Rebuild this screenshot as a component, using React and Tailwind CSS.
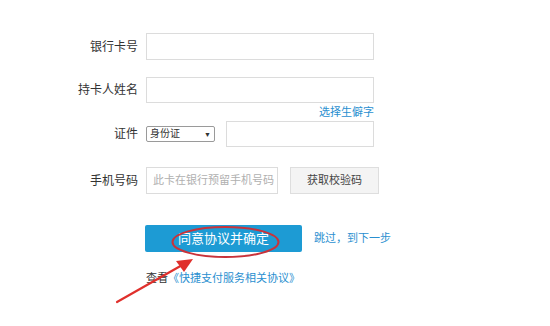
const App = () => {
  return (
    <div
      className="relative w-[550px] h-[326px] bg-white text-[#333] overflow-hidden"
      style={{ fontFamily: '"Liberation Sans", "Noto Sans CJK SC", sans-serif' }}
    >
      <div className="flex flex-col pt-[33px]">
        {/* 银行卡号 */}
        <div className="flex items-center">
          <label className="w-[138px] pr-0 text-right text-[12px]">银行卡号</label>
          <div className="ml-[8px] w-[228px] h-[27px] border border-[#dcdcdc] bg-white" />
        </div>

        {/* 持卡人姓名 */}
        <div className="flex items-center mt-[17px]">
          <label className="w-[138px] text-right text-[12px]">持卡人姓名</label>
          <div className="ml-[8px] w-[228px] h-[26px] border border-[#dcdcdc] bg-white" />
        </div>
        <div className="w-[374px] text-right text-[11px] leading-[16px] mt-[1px] text-[#2a8fd0]">选择生僻字</div>

        {/* 证件 */}
        <div className="flex items-center mt-[1px]">
          <label className="w-[138px] text-right text-[12px]">证件</label>
          <div className="ml-[8px] w-[69px] h-[16px] border border-[#9a9a9a] rounded-[2px] flex items-center justify-between px-[3px] text-[10px] leading-none">
            <span>身份证</span>
            <span className="text-[7px]">▼</span>
          </div>
          <div className="ml-[11px] w-[148px] h-[26px] border border-[#dcdcdc] bg-white" />
        </div>

        {/* 手机号码 */}
        <div className="flex items-center mt-[20px]">
          <label className="w-[138px] text-right text-[12px]">手机号码</label>
          <div className="ml-[8px] w-[132px] h-[27px] border border-[#dcdcdc] bg-white flex items-center pl-[6px] text-[11px] text-[#b0b0b0]">
            此卡在银行预留手机号码
          </div>
          <button className="ml-[12px] w-[89px] h-[27px] border border-[#dedede] bg-[#f4f4f4] text-[11px] text-[#444]">
            获取校验码
          </button>
        </div>

        {/* 提交 */}
        <div className="flex items-center mt-[31px] pl-[145px]">
          <button className="w-[157px] h-[27px] rounded-[2px] bg-[#1d9bd4] text-white text-[13px]">
            同意协议并确定
          </button>
          <span className="ml-[12px] text-[11px] text-[#2a8fd0]">跳过，到下一步</span>
        </div>

        <div className="mt-[18px] pl-[146px] text-[11px]">
          <span className="text-[#333]">查看</span>
          <span className="text-[#2a8fd0]">《快捷支付服务相关协议》</span>
        </div>
      </div>

      {/* 标注 */}
      <svg className="absolute left-0 top-0 pointer-events-none" width="550" height="326" viewBox="0 0 550 326">
        <ellipse cx="225.5" cy="242" rx="53" ry="15" fill="none" stroke="#c8333b" strokeWidth="2" />
        <line x1="117" y1="302" x2="184" y2="264" stroke="#e0302c" strokeWidth="2.2" strokeLinecap="round" />
        <polygon points="193,259 176,261 184,272" fill="#e0302c" />
      </svg>
    </div>
  );
};

export default App;
